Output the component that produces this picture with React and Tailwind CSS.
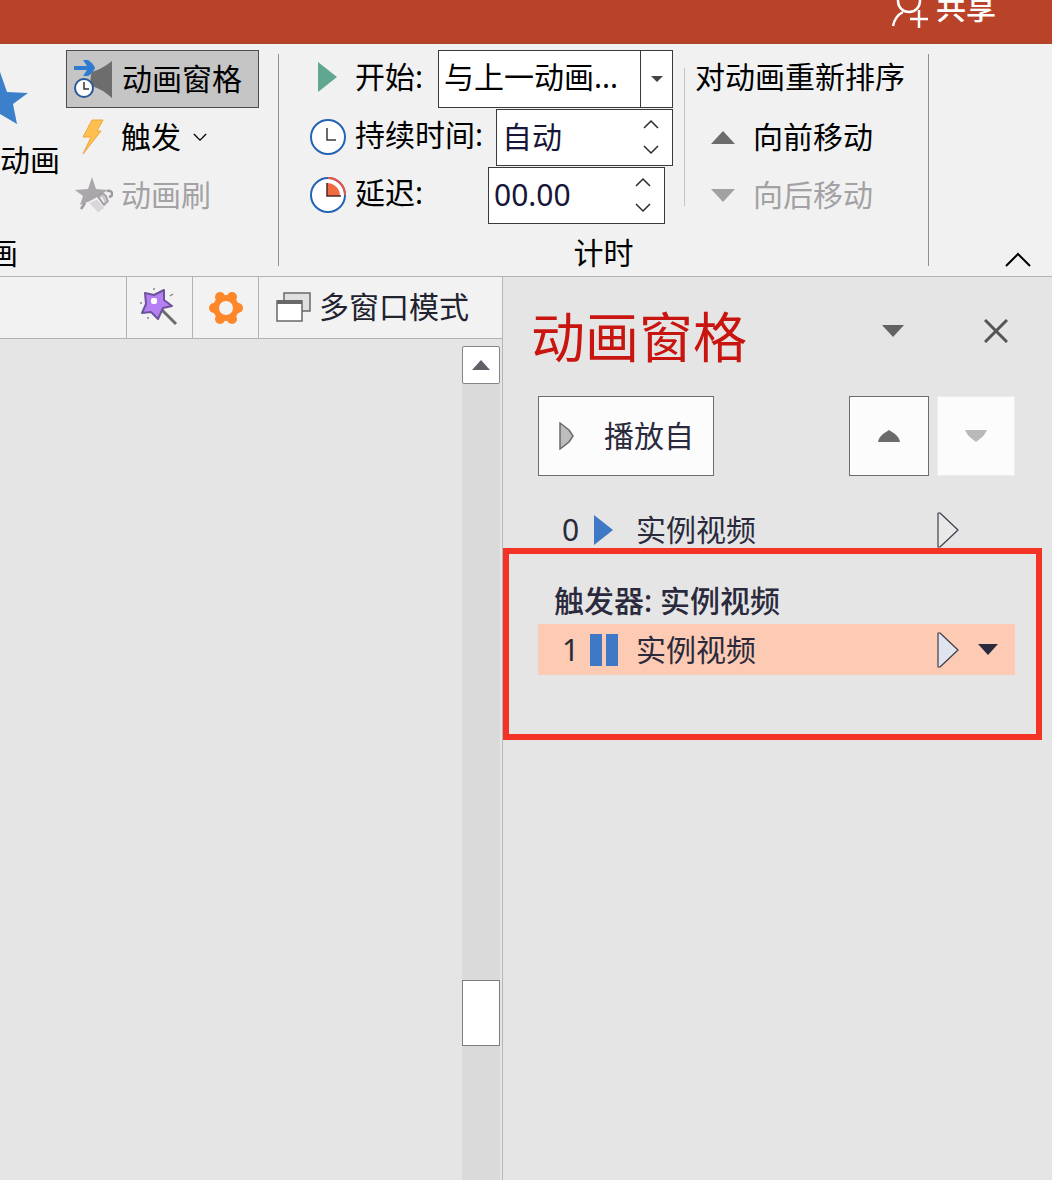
import { useState } from "react";

const boxClass = "border border-[#3a3a3a] bg-white";

/* ---------- small shared glyphs ---------- */

function Triangle({ down, className }) {
  return (
    <svg className={className} viewBox="0 0 24 12" preserveAspectRatio="none" fill="currentColor" aria-hidden="true">
      <path d={down ? "M0 0h24L12 12z" : "M0 12h24L12 0z"} />
    </svg>
  );
}

function Chevron({ down, className }) {
  return (
    <svg className={className} viewBox="0 0 16 10" fill="none" stroke="currentColor" strokeWidth="1.5" aria-hidden="true">
      <path d={down ? "M1 1l7 7 7-7" : "M1 9l7-7 7 7"} />
    </svg>
  );
}

function OutlinePlay({ fill }) {
  return (
    <svg className="w-6 h-9 shrink-0" viewBox="0 0 24 36" aria-hidden="true">
      <path d="M2 1h2l18 17L4 35H2z" fill={fill} stroke="#3d3f4c" strokeWidth="1.2" strokeLinejoin="round" />
    </svg>
  );
}

/* ---------- ribbon icons ---------- */

function AnimationPaneIcon() {
  return (
    <svg className="w-[42px] h-11" viewBox="0 0 42 44" aria-hidden="true">
      <path d="M20 15q10-3 20-11v37q-10-9-20-12c-2-4-2-10 0-14z" fill="#6d6d6d" />
      <path d="M2 9h13l-4-6h5q5 3 7 8-2 5-7 8h-5l4-6H2z" fill="#2f7bd0" />
      <circle cx="12" cy="31" r="9" fill="#fff" stroke="#28599c" strokeWidth="2" />
      <path d="M12 25v7h5" fill="none" stroke="#333" strokeWidth="1.5" />
    </svg>
  );
}

function BoltIcon() {
  return (
    <svg className="w-[22px] h-9" viewBox="0 0 22 36" aria-hidden="true">
      <path d="M10 1h11l-6 11h4L1 35l8-17H1z" fill="#fdbf4d" stroke="#efa63c" strokeWidth="1" />
    </svg>
  );
}

function PainterIcon() {
  return (
    <svg className="w-[38px] h-9" viewBox="0 0 38 36" aria-hidden="true">
      <path d="M17 0l4 12 12 1-9 6-9 5-10 4 3-9-8-6 13-1z" fill="#aaa6ab" />
      <path d="M14 26l8-4 8 9-7 5z" fill="#d9d6d9" stroke="#f1f1f1" strokeWidth="1" />
      <path d="M23 20l3-3q3-1 5 2l2 5-4 4z" fill="#c9c6c9" stroke="#9c989d" strokeWidth="1.5" />
      <path d="M26 20l3 5" stroke="#f1f1f1" strokeWidth="1.5" />
      <path d="M32 14q4-1 5 2t-3 4" fill="none" stroke="#9c989d" strokeWidth="2.5" />
      <path d="M6 32l4-6" stroke="#9c989d" strokeWidth="2.5" />
    </svg>
  );
}

function ClockIcon({ delay }) {
  return (
    <svg className="w-9 h-9 shrink-0" viewBox="0 0 36 36" aria-hidden="true">
      <circle cx="18" cy="18" r="17" fill="#fff" stroke="#2563b4" strokeWidth="2" />
      {delay ? (
        <>
          <path d="M18 1a17 17 0 0 1 17 17" fill="none" stroke="#ee5346" strokeWidth="2" />
          <path d="M17 6a13 13 0 0 1 13 13H17z" fill="#f26a40" />
          <path d="M17 6v13h14" fill="none" stroke="#4a2a2a" strokeWidth="1.5" />
        </>
      ) : (
        <path d="M17 9v12h9" fill="none" stroke="#3b3b3b" strokeWidth="1.5" />
      )}
    </svg>
  );
}

/* ---------- tool strip icons ---------- */

function WandIcon() {
  return (
    <svg className="w-10 h-10" viewBox="0 0 40 40" aria-hidden="true">
      <path d="M22 22l14 14" stroke="#6b6b6b" strokeWidth="3" />
      <path d="M5 5l9 2 10-5v10l8 6-9 2-5 11-7-7-9 1 4-9z" fill="#b67ff2" stroke="#6d549a" strokeWidth="2" strokeLinejoin="round" />
      <rect x="11" y="10" width="6" height="6" rx="2" fill="#fff" />
      <path d="M14 0v2M33 6l-3 2M0 15h2M7 30h2" stroke="#8a8190" strokeWidth="1.5" />
    </svg>
  );
}

function GearIcon() {
  return (
    <svg className="w-9 h-9" viewBox="0 0 36 36" aria-hidden="true">
      <g fill="#fd8729">
        <circle cx="18" cy="18" r="13" />
        <circle cx="6" cy="18" r="5" />
        <circle cx="30" cy="18" r="5" />
        <circle cx="12" cy="7" r="5" />
        <circle cx="24" cy="7" r="5" />
        <circle cx="12" cy="29" r="5" />
        <circle cx="24" cy="29" r="5" />
      </g>
      <circle cx="18" cy="18" r="7" fill="#f2f2f3" />
    </svg>
  );
}

function WindowsIcon() {
  return (
    <svg className="w-[35px] h-[30px]" viewBox="0 0 35 30" fill="none" stroke="#686868" strokeWidth="1.5" aria-hidden="true">
      <path d="M8 1h26v18H8z" fill="#dfe0e0" />
      <path d="M1 9h25v20H1z" fill="#fff" />
      <path d="M1 10h25" strokeWidth="4" />
    </svg>
  );
}

/* ---------- ribbon ---------- */

function Spinner({ id, value, onChange }) {
  return (
    <div className={`${boxClass} flex w-[177px] h-[57px]`}>
      <input
        id={id}
        type="text"
        value={value}
        onChange={(e) => onChange(e.target.value)}
        className="flex-1 min-w-0 pl-[5px] text-[#17163a] bg-transparent focus:outline-none"
      />
      <div className="flex flex-col justify-center gap-4 w-[42px] text-[#2b2b2b]">
        <button type="button" aria-label="增加" className="flex justify-center"><Chevron className="w-4 h-[10px]" /></button>
        <button type="button" aria-label="减少" className="flex justify-center"><Chevron down className="w-4 h-[10px]" /></button>
      </div>
    </div>
  );
}

function Ribbon() {
  const [start, setStart] = useState("with");
  const [duration, setDuration] = useState("自动");
  const [delay, setDelay] = useState("00.00");

  return (
    <div className="flex h-[233px] shrink-0 bg-[#f1f1f1] border-b border-[#b3b3b3] text-black">
      {/* Animation group, scrolled off to the left */}
      <div className="flex shrink-0 w-[278px]">
        <div className="flex flex-col w-[66px]">
          <button type="button" className="flex flex-col items-start pt-[26px]">
            <svg className="w-7 h-14" viewBox="0 0 28 56" aria-hidden="true">
              <path d="M0 2l7 20 21 1-15 11 4 20L0 44z" fill="#3c7fcb" />
            </svg>
            <span className="mt-[14px] h-10 leading-10 whitespace-nowrap">动画</span>
          </button>
          <span className="mt-auto mb-[3px] flex w-[18px] h-10 leading-10 justify-end overflow-hidden">画</span>
        </div>
        <div className="flex flex-col w-[193px] pt-[6px]">
          <button type="button" className="flex items-center h-[58px] pl-[5px] border border-[#4d4d4d] bg-[#c5c5c5]">
            <AnimationPaneIcon />
            <span className="ml-2">动画窗格</span>
          </button>
          <button type="button" className="flex items-center h-[58px] pl-4">
            <BoltIcon />
            <span className="ml-[17px]">触发</span>
            <Chevron down className="w-[14px] h-[9px] ml-3" />
          </button>
          <button type="button" disabled className="flex items-center h-[58px] pl-[9px] text-[#a3a1a3]">
            <PainterIcon />
            <span className="ml-2">动画刷</span>
          </button>
        </div>
      </div>
      <div className="w-px mt-[10px] mb-[10px] shrink-0 bg-[#8f8f8f]" />

      {/* Timing group */}
      <div className="flex flex-col shrink-0 w-[649px] pt-[6px]">
        <div className="flex">
          <div className="w-[394px] pl-[31px]">
            <div className="flex items-center h-[58px]">
              <svg className="w-9 h-9 mb-1" viewBox="0 0 36 36" aria-hidden="true">
                <path d="M8 3l19 15L8 33z" fill="#5fa791" />
              </svg>
              <label htmlFor="start" className="ml-[9px] mb-1">开始:</label>
              <div className="relative ml-auto w-[235px]">
                <select
                  id="start"
                  value={start}
                  onChange={(e) => setStart(e.target.value)}
                  className={`${boxClass} block w-full h-[58px] pl-[5px] pb-1 appearance-none focus:outline-none`}
                >
                  <option value="with">与上一动画...</option>
                  <option value="after">上一动画之后</option>
                </select>
                <span className="absolute inset-y-0 right-0 w-[33px] flex items-center justify-center border-l border-[#3a3a3a] pointer-events-none text-[#444]">
                  <Triangle down className="w-3 h-[6px]" />
                </span>
              </div>
            </div>
            <div className="flex items-center h-[58px]">
              <ClockIcon />
              <label htmlFor="duration" className="ml-[9px] mb-1 mr-auto">持续时间:</label>
              <Spinner id="duration" value={duration} onChange={setDuration} />
            </div>
            <div className="flex items-center h-[58px] pr-2">
              <ClockIcon delay />
              <label htmlFor="delay" className="ml-[9px] mb-1 mr-auto">延迟:</label>
              <Spinner id="delay" value={delay} onChange={setDelay} />
            </div>
          </div>

          <div className="w-px h-[138px] mt-[18px] ml-[11px] bg-[#c4c4c4]" />

          <div className="flex flex-col pl-[10px]">
            <p className="h-[58px] leading-[54px]">对动画重新排序</p>
            <button type="button" className="flex items-center h-[58px] pl-4 gap-[18px]">
              <Triangle className="w-6 h-[13px] text-[#6c6c6c]" />
              向前移动
            </button>
            <button type="button" disabled className="flex items-center h-[58px] pl-4 gap-[18px] text-[#a3a1a3]">
              <Triangle down className="w-6 h-[13px]" />
              向后移动
            </button>
          </div>
        </div>
        <p className="mt-auto mb-[3px] h-10 leading-10 text-center">计时</p>
      </div>
      <div className="w-px mt-[10px] mb-[10px] shrink-0 bg-[#8f8f8f]" />

      <button type="button" aria-label="折叠功能区" className="self-end ml-auto mr-5 mb-2">
        <svg className="w-7 h-4" viewBox="0 0 28 16" fill="none" stroke="currentColor" strokeWidth="2" aria-hidden="true">
          <path d="M2 14L14 2l12 12" />
        </svg>
      </button>
    </div>
  );
}

/* ---------- animation pane ---------- */

function AnimationPane() {
  return (
    <aside className="flex flex-col shrink-0 w-[550px] border-l border-[#b5b5b9] text-[#2a2a3c]">
      <div className="flex items-center h-[119px] pl-7 pr-11 pb-3">
        <h1 className="mt-3 text-[54px] leading-[64px] text-[#c8150f]">动画窗格</h1>
        <button type="button" aria-label="窗格选项" className="ml-auto text-[#626262]">
          <Triangle down className="w-[22px] h-3" />
        </button>
        <button type="button" aria-label="关闭" className="ml-20 text-[#555]">
          <svg className="w-6 h-6" viewBox="0 0 24 24" fill="none" stroke="currentColor" strokeWidth="3" aria-hidden="true">
            <path d="M1 1l22 22M23 1L1 23" />
          </svg>
        </button>
      </div>

      <div className="flex h-20 pl-[35px] pr-[37px]">
        <button type="button" className="flex items-center w-44 pl-5 border border-[#6d6d6d] bg-[#fcfcfd]">
          <svg className="w-4 h-7" viewBox="0 0 16 28" aria-hidden="true">
            <path d="M1 1l9 7 4 6-4 6-9 7z" fill="#bdbdbd" stroke="#6a6a6a" strokeWidth="1.5" />
          </svg>
          <span className="ml-[29px]">播放自</span>
        </button>
        <button type="button" aria-label="上移" className="flex items-center justify-center w-20 ml-auto border border-[#6d6d6d] bg-[#fcfcfd] text-[#6b6b6b]">
          <svg className="w-[22px] h-3" viewBox="0 0 22 12" fill="currentColor" aria-hidden="true">
            <path d="M0 12q1-5 5-8l6-4 6 4q4 3 5 8z" />
          </svg>
        </button>
        <button type="button" aria-label="下移" disabled className="flex items-center justify-center w-[78px] ml-2 border border-[#ececec] bg-[#fcfcfd] text-[#b9b9b9]">
          <svg className="w-[22px] h-3" viewBox="0 0 22 12" fill="currentColor" aria-hidden="true">
            <path d="M0 0h22q-3 6-6 8l-5 4-5-4q-4-3-6-8z" />
          </svg>
        </button>
      </div>

      <div className="flex items-center h-9 mt-9 pl-[59px]">
        <span className="w-[30px]">0</span>
        <svg className="w-[30px] h-8" viewBox="0 0 30 32" aria-hidden="true">
          <path d="M2 1l19 15L2 31z" fill="#3f78c4" />
        </svg>
        <span className="ml-[14px] w-[300px]">实例视频</span>
        <OutlinePlay fill="#e8e8e9" />
      </div>

      {/* Highlighted trigger section */}
      <section className="mr-[10px] pt-6 pb-[59px] pl-[29px] pr-[21px] border-[6px] border-[#f53325]">
        <h2 className="h-[46px] pl-4 leading-[46px] font-medium">触发器: 实例视频</h2>
        <div className="flex items-center h-[51px] pl-6 bg-[#fdcab3]">
          <span className="w-7">1</span>
          <svg className="w-[28px] h-8" viewBox="0 0 28 32" fill="#3f78c4" aria-hidden="true">
            <path d="M0 0h12v32H0zM16 0h12v32H16z" />
          </svg>
          <span className="ml-[18px] w-[300px]">实例视频</span>
          <OutlinePlay fill="#dfe4ee" />
          <button type="button" aria-label="效果选项" className="ml-[18px]">
            <Triangle down className="w-5 h-[11px]" />
          </button>
        </div>
      </section>
    </aside>
  );
}

export default function App() {
  return (
    <div className="flex flex-col min-h-screen overflow-hidden bg-[#e5e5e6] font-['Noto_Sans','Noto_Sans_CJK_SC',sans-serif] text-[30px] leading-10 whitespace-nowrap">
      {/* Title bar */}
      <header className="flex justify-end items-start h-11 shrink-0 pr-14 overflow-hidden bg-[#b94329] border-b border-[#a8452f] text-white">
        <button type="button" className="flex items-start gap-[7px]">
          <svg className="w-[38px] h-7" viewBox="0 0 38 28" fill="none" stroke="currentColor" strokeWidth="2.5" aria-hidden="true">
            <circle cx="18" cy="1" r="11" />
            <path d="M2 26q2-10 10-14M28 10v18M19 19h18" />
          </svg>
          <span className="-mt-3 font-medium">共享</span>
        </button>
      </header>

      <Ribbon />

      <div className="flex flex-1">
        <main className="flex flex-col flex-1 min-w-0">
          <div className="flex justify-end h-[62px] bg-[#f2f2f3] border-b border-[#b3b3b3] text-[#22222e]">
            <button type="button" aria-label="魔法棒" className="flex items-center justify-center w-[66px] border-l border-[#b3b3b3]"><WandIcon /></button>
            <button type="button" aria-label="设置" className="flex items-center justify-center w-[66px] border-l border-[#b3b3b3]"><GearIcon /></button>
            <button type="button" className="flex items-center w-[244px] pl-[17px] pb-[2px] gap-2 border-l border-[#b3b3b3]">
              <WindowsIcon />
              多窗口模式
            </button>
          </div>

          <div className="flex flex-1 justify-end pt-[7px] pr-[2px]">
            <div className="flex flex-col w-[38px] bg-[#dadadb]">
              <button type="button" aria-label="向上滚动" className="flex items-center justify-center h-[38px] rounded-xs border border-[#858585] bg-white text-[#5f6068]">
                <Triangle className="w-[18px] h-[10px]" />
              </button>
              <div className="h-[66px] mt-auto mb-[134px] border border-[#7d7d7d] bg-white" />
            </div>
          </div>
        </main>

        <AnimationPane />
      </div>
    </div>
  );
}
